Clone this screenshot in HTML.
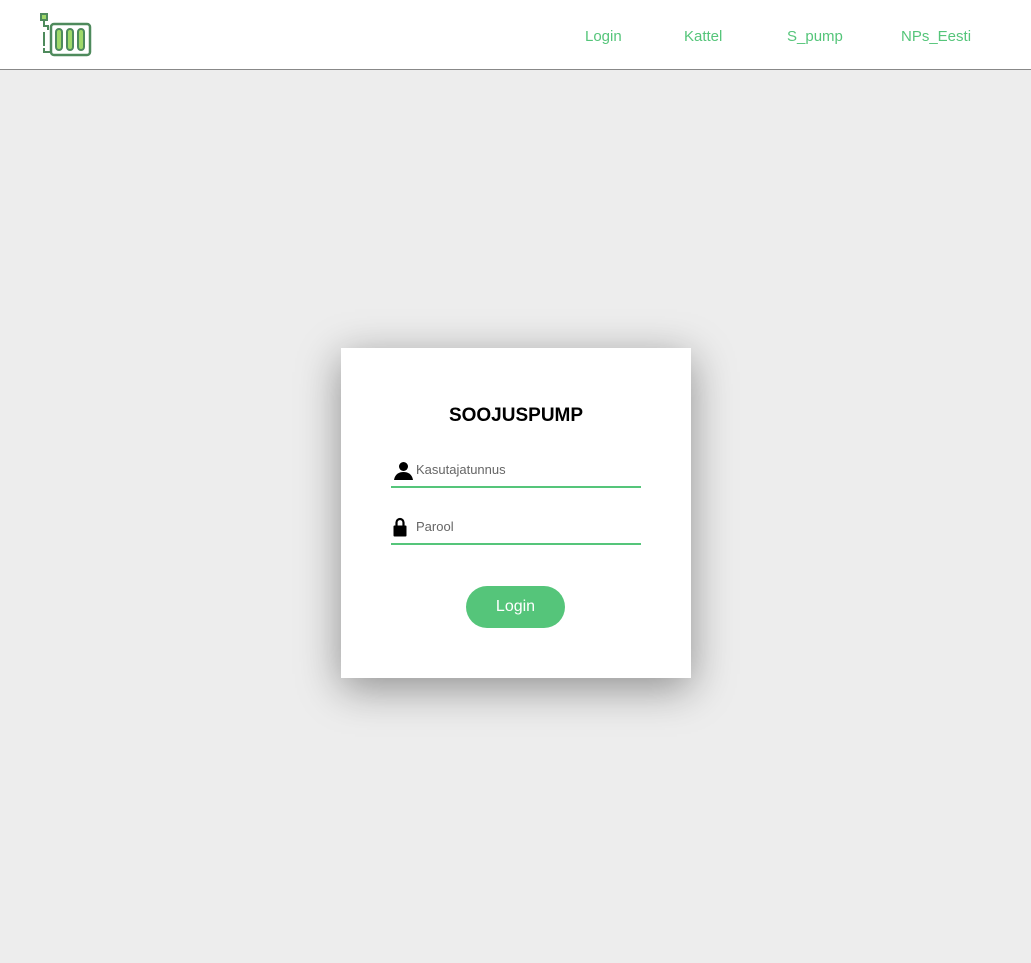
<!DOCTYPE html>
<html><head><style>
body{margin:0;width:1031px;height:963px;background:#ededed;font-family:"Liberation Sans",sans-serif;position:relative;overflow:hidden}
.nav{position:absolute;left:0;top:0;width:1031px;height:69px;background:#fff;border-bottom:1px solid #888}
.nav a{position:absolute;top:27px;color:#55c57a;font-size:15px;text-decoration:none}
.card{position:absolute;left:341px;top:348px;width:350px;height:330px;background:#fff;box-shadow:0 10px 40px rgba(0,0,0,.4)}
h1{position:absolute;left:0;width:350px;top:57px;margin:0;text-align:center;font-size:19px;font-weight:bold;color:#000}
.f{position:absolute;left:50px;width:250px;height:2px;background:#55c57a}
.ph{position:absolute;left:75px;font-size:13px;color:#666}
.btn{position:absolute;left:125px;top:238px;width:99px;height:42px;border-radius:21px;background:#55c57a;color:#fff;font-size:16px;text-align:center;line-height:42px}
</style></head><body>
<div class="nav">
<svg style="position:absolute;left:38px;top:12px" width="56" height="46" viewBox="0 0 56 46">
<rect x="3" y="2" width="6" height="6" fill="#9fd86a" stroke="#4e8a5c" stroke-width="2"/>
<path d="M6 8V14H10V18M6 20V34M6 36V40H12" stroke="#4e8a5c" stroke-width="2" fill="none"/>
<rect x="13" y="12" width="39" height="31" rx="3" fill="none" stroke="#4e8a5c" stroke-width="2.5"/>
<rect x="18" y="17" width="6" height="21" rx="3" fill="#9fd86a" stroke="#4e8a5c" stroke-width="2"/>
<rect x="29" y="17" width="6" height="21" rx="3" fill="#9fd86a" stroke="#4e8a5c" stroke-width="2"/>
<rect x="40" y="17" width="6" height="21" rx="3" fill="#9fd86a" stroke="#4e8a5c" stroke-width="2"/>
</svg>
<a style="left:585px;top:28px">Login</a><a style="left:684px;top:28px">Kattel</a><a style="left:787px;top:28px">S_pump</a><a style="left:901px;top:28px">NPs_Eesti</a>
</div>
<div class="card">
<h1>SOOJUSPUMP</h1>
<svg style="position:absolute;left:53px;top:113px" width="19" height="19" viewBox="0 0 19 19"><circle cx="9.5" cy="5.5" r="4.5"/><path d="M0 19C1 13 5 11 9.5 11S18 13 19 19Z"/></svg>
<div class="ph" style="top:114px">Kasutajatunnus</div>
<div class="f" style="top:138px"></div>
<svg style="position:absolute;left:52px;top:169px" width="14" height="20" viewBox="0 0 14 20"><path d="M3.5 9V5.5a3.5 3.5 0 0 1 7 0V9" fill="none" stroke="#000" stroke-width="2.2"/><rect x="0.5" y="8.5" width="13" height="11" rx="1"/></svg>
<div class="ph" style="top:171px">Parool</div>
<div class="f" style="top:195px"></div>
<div class="btn">Login</div>
</div>
</body></html>
